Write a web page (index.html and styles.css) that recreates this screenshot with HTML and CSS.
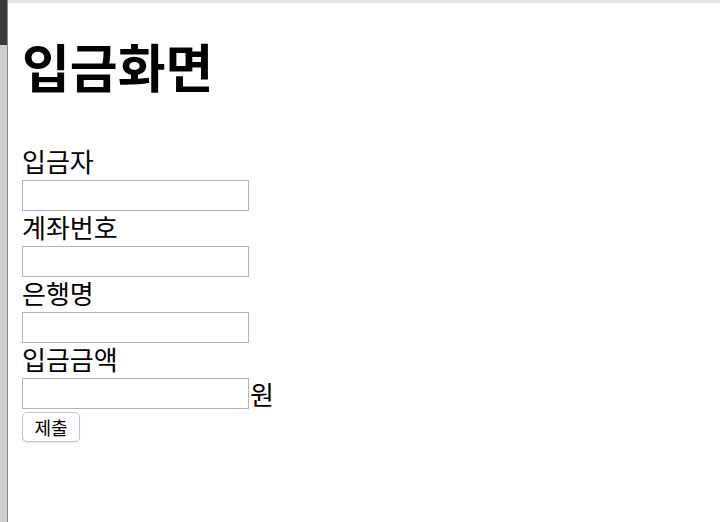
FILE: index.html
```html
<!doctype html>
<html lang="ko">
	<head>
	<meta charset="utf-8">
	<title>입금화면</title>
	<link rel="stylesheet" href="styles.css">
	</head>
	<body>

		<div class="screen">
			<div class="side-strip">
				<div class="strip-top"></div>
				<div class="strip-body"></div>
			</div>

			<section class="content">
				<h1>입금화면</h1>

				<form class="deposit-form" action="#" method="post">
					<label class="field-label" for="depositor">입금자</label>
					<input class="field-input" type="text" id="depositor" name="depositor">

					<label class="field-label" for="account">계좌번호</label>
					<input class="field-input" type="text" id="account" name="account">

					<label class="field-label" for="bank">은행명</label>
					<input class="field-input" type="text" id="bank" name="bank">

					<label class="field-label" for="amount">입금금액</label>
					<div class="amount-row">
						<input class="field-input" type="text" id="amount" name="amount">
						<span class="unit">원</span>
					</div>

					<button class="submit-btn" type="submit">제출</button>
				</form>
			</section>
		</div>

	</body>
</html>
```

FILE: styles.css
```css
html, body {
	margin: 0;
	padding: 0;
	height: 100%;
	background: #fff;
}

.screen {
	display: flex;
	height: 100%;
	font-family: "Noto Sans CJK KR", "Noto Sans", sans-serif;
	color: #000;
}

/* edge of the window behind */
.side-strip {
	width: 7px;
	display: flex;
	flex-direction: column;
	border-right: 1px solid #8a8a8a;
}

.strip-top {
	height: 45px;
	background: #3a3a3a;
}

.strip-body {
	flex: 1;
	background: #cfcfcf;
}

.content {
	flex: 1;
	border-top: 3px solid #e4e4e4;
	padding-left: 14px;
}

h1 {
	font-size: 52px;
	line-height: 60px;
	font-weight: bold;
	margin: 33px 0 49px;
}

.deposit-form {
	display: flex;
	flex-direction: column;
	align-items: flex-start;
}

.field-label {
	display: block;
	font-size: 26px;
	line-height: 31px;
	padding-bottom: 4px;
}

.field-input {
	display: block;
	box-sizing: border-box;
	width: 227px;
	height: 31px;
	margin: 0;
	border: 1px solid #b4b4b4;
	background: #fff;
}

.amount-row {
	display: flex;
	align-items: center;
}

.unit {
	font-size: 26px;
	line-height: 31px;
	margin-left: 1px;
}

.submit-btn {
	margin-top: 3px;
	width: 58px;
	height: 30px;
	font-family: "Noto Sans CJK KR", sans-serif;
	font-size: 18px;
	background: #fff;
	border: 1px solid #c4c4c4;
	border-radius: 5px;
	box-shadow: 0 1px 1px rgba(0, 0, 0, 0.08);
	padding: 0;
	color: #000;
}
```
